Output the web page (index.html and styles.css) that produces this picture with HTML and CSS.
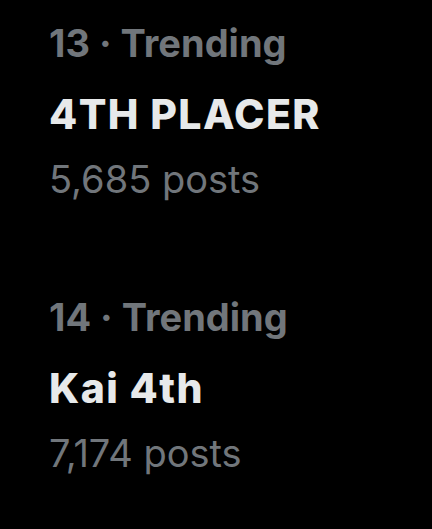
FILE: index.html
```html
<!DOCTYPE html>
<html lang="en">
<head>
    <meta charset="UTF-8">
    <meta name="viewport" content="width=device-width, initial-scale=1.0">
    <title>Trending</title>
    <link rel="stylesheet" href="styles.css">
</head>
<body>
    <div class="trends">
        <div class="trend">
            <div class="trend-meta">13 · Trending</div>
            <div class="trend-title">4TH PLACER</div>
            <div class="trend-count">5,685 posts</div>
        </div>
        <div class="trend">
            <div class="trend-meta">14 · Trending</div>
            <div class="trend-title">Kai 4th</div>
            <div class="trend-count">7,174 posts</div>
        </div>
    </div>
</body>
</html>
```

FILE: styles.css
```css
* {
    margin: 0;
    padding: 0;
    box-sizing: border-box;
    font-family: Inter, "Noto Sans", sans-serif;
}

body {
    background-color: #000;
    min-height: 100vh;
}

.trends {
    display: flex;
    flex-direction: column;
    gap: 90px;
    padding: 19px 0 0 49px;
}

.trend {
    display: flex;
    flex-direction: column;
}

.trend-meta,
.trend-title,
.trend-count {
    font-size: 38px;
    line-height: 48px;
    white-space: nowrap;
}

.trend-meta {
    color: #71767b;
    font-weight: 700;
}

.trend-title {
    color: #e7e9ea;
    font-size: 41px;
    font-weight: 800;
    letter-spacing: 1.4px;
    margin-top: 23px;
}

.trend-count {
    color: #71767b;
    font-weight: 400;
    margin-top: 17px;
}
```
